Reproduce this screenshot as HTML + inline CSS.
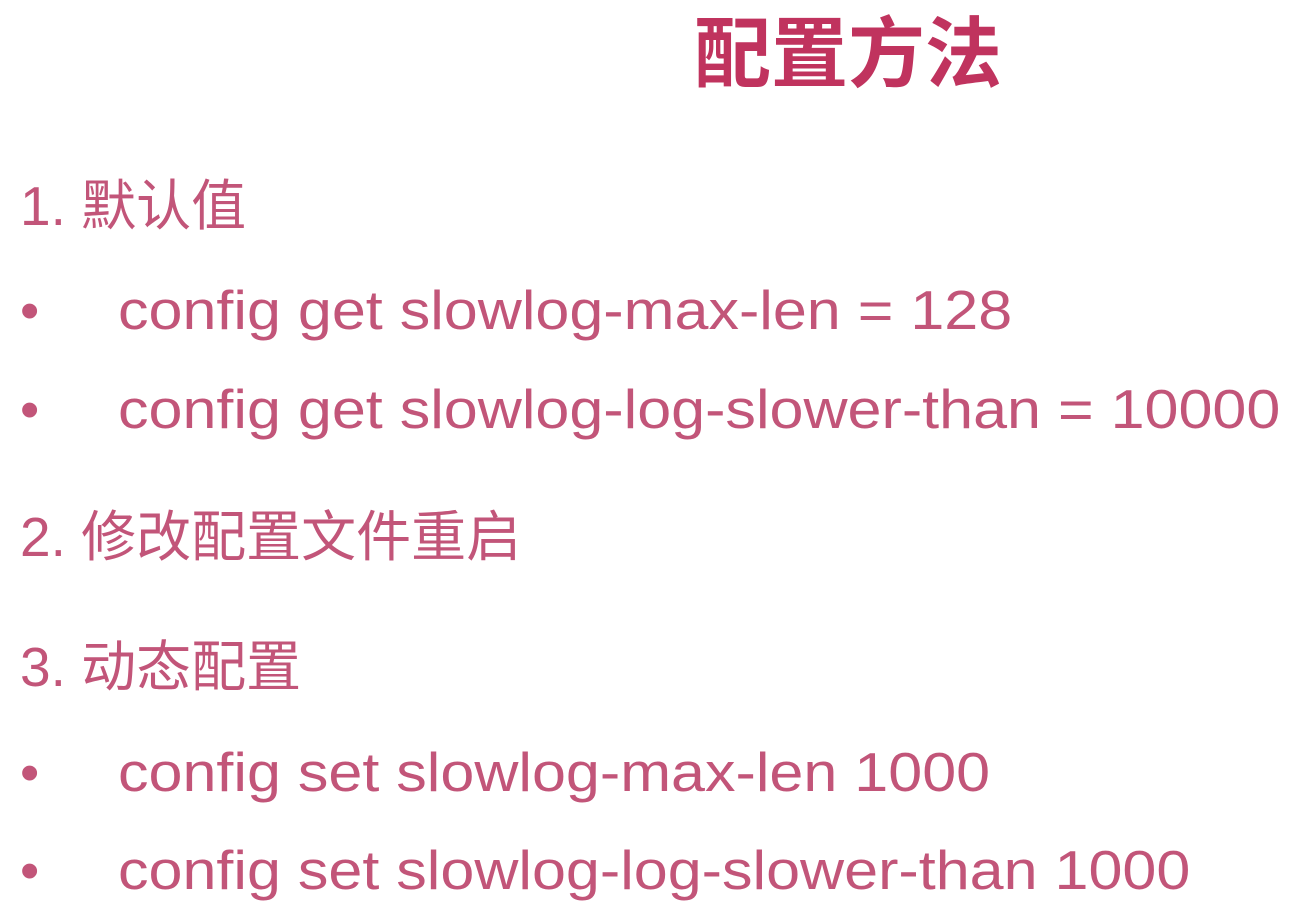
<!DOCTYPE html>
<html><head><meta charset="utf-8"><style>
html,body{margin:0;padding:0;background:#fff;width:1314px;height:908px;overflow:hidden}
div{position:absolute;white-space:nowrap;line-height:1;font-family:"Liberation Sans","Noto Sans CJK SC",sans-serif;color:#c25579}
.t{left:694px;top:17px;font-size:77px;font-weight:bold;color:#c0335e}
.h{left:20px;font-size:55px}
.b{left:20px;font-size:55px}
.b span{position:absolute;left:98px;transform:scaleX(1.11);transform-origin:0 0}
</style></head><body>
<div class="t">配置方法</div>
<div class="h" style="top:179px">1. 默认值</div>
<div class="b" style="top:283px">•<span>config get slowlog-max-len = 128</span></div>
<div class="b" style="top:382px">•<span>config get slowlog-log-slower-than = 10000</span></div>
<div class="h" style="top:510px">2. 修改配置文件重启</div>
<div class="h" style="top:640px">3. 动态配置</div>
<div class="b" style="top:745px">•<span>config set slowlog-max-len 1000</span></div>
<div class="b" style="top:843px">•<span>config set slowlog-log-slower-than 1000</span></div>
</body></html>
